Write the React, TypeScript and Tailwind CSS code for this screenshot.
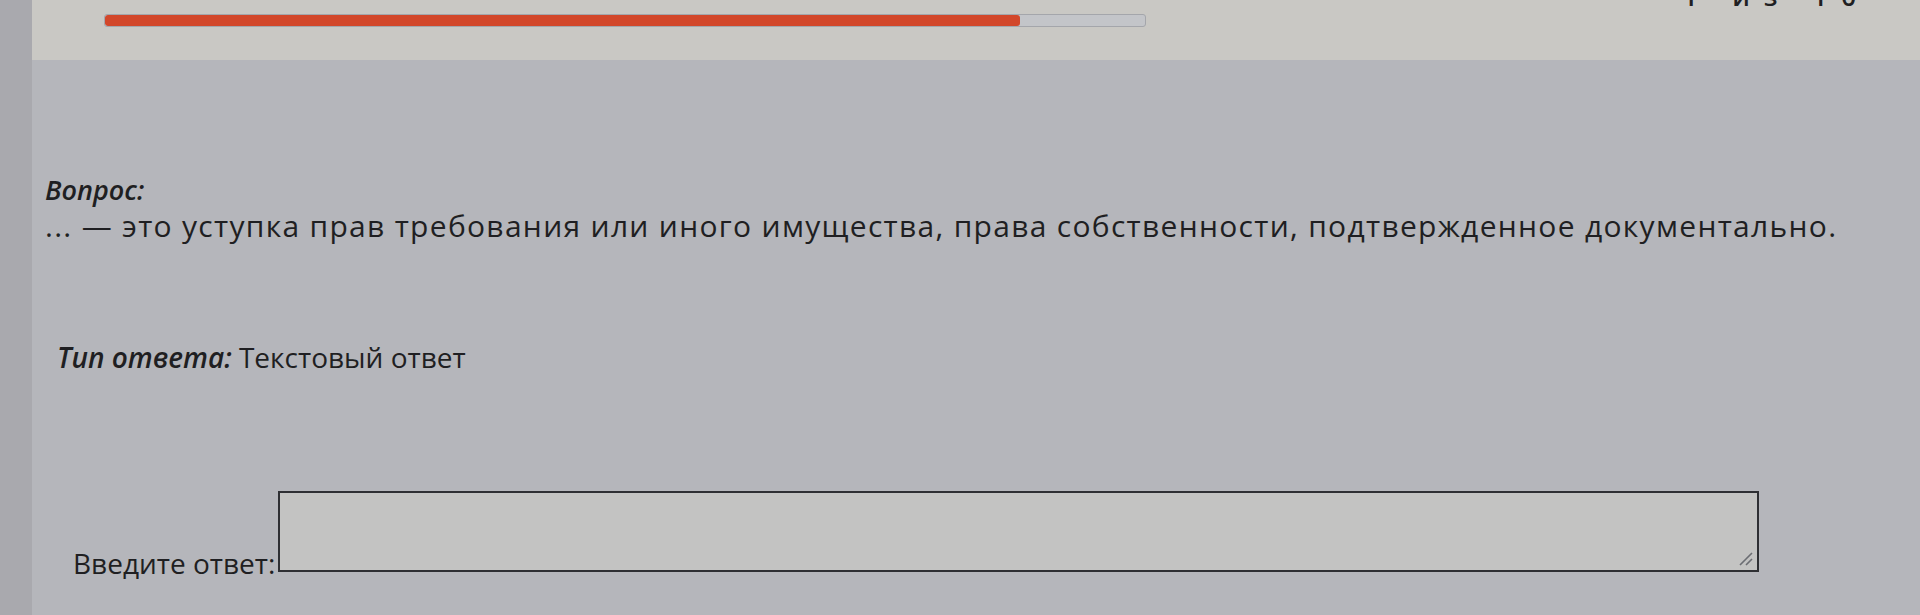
import React from 'react';

const App: React.FC = () => {
  return (
    <div className="w-[1920px] h-[615px] overflow-hidden flex bg-[#b5b6bb] text-[#1f1f22]" style={{ fontFamily: '"Open Sans", "Noto Sans", sans-serif' }}>
      <div className="w-[32px] shrink-0 bg-[#a9a9ae]" />
      <div className="flex-1 flex flex-col">
        {/* progress header */}
        <div className="h-[60px] bg-[#c9c8c4] flex items-start pl-[72px] pr-[50px] overflow-hidden">
          <div className="mt-[14px] w-[1042px] h-[13px] bg-[#c3c5c9] border border-[#a4a6ab] rounded-[3px] overflow-hidden">
            <div className="h-full w-[915px] bg-[#d2472a] rounded-[3px]" />
          </div>
          <div className="ml-auto -mt-[18px] text-[26px] leading-[28px] font-semibold tracking-[14px]">1 из 10</div>
        </div>

        <div className="flex flex-col pl-[13px]">
          <div className="mt-[114px] text-[27px] leading-[32px] font-semibold italic">Вопрос:</div>
          <div className="mt-[2px] text-[30px] leading-[36px] tracking-[1.3px]">
            ... — это уступка прав требования или иного имущества, права собственности, подтвержденное документально.
          </div>

          <div className="mt-[96px] ml-[12px] text-[28px] leading-[34px]">
            <span className="font-semibold italic">Тип ответа:</span> Текстовый ответ
          </div>

          <div className="mt-[117px] ml-[28px] flex items-end">
            <span className="text-[28px] leading-[34px] mb-[-8px]">Введите ответ:</span>
            <div className="ml-[3px] w-[1481px] h-[81px] bg-[#c3c3c2] border-2 border-[#2e2f33] relative">
              <svg className="absolute right-[4px] bottom-[4px]" width="16" height="16" viewBox="0 0 16 16">
                <path d="M15 3 L3 15 M15 9 L9 15" stroke="#6b6d72" strokeWidth="1.6" fill="none" />
              </svg>
            </div>
          </div>
        </div>
      </div>
    </div>
  );
};

export default App;
